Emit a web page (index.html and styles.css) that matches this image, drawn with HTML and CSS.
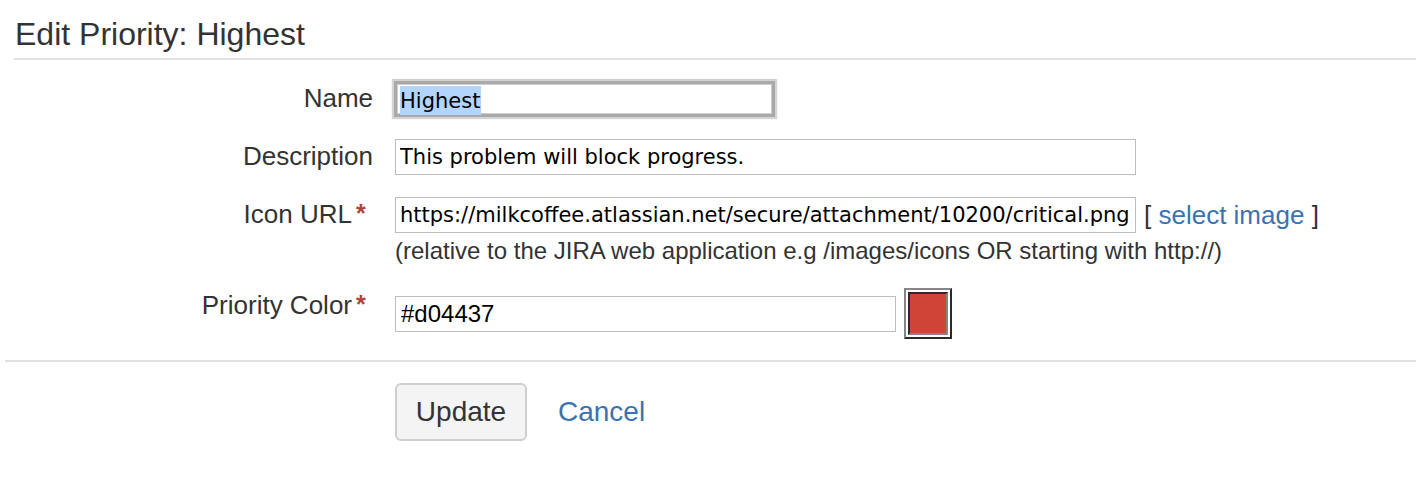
FILE: index.html
```html
<!DOCTYPE html>
<html>
<head>
<meta charset="utf-8">
<link rel="stylesheet" href="styles.css">
<title>Edit Priority</title>
</head>
<body>
<header class="page-head">
  <h2 class="title">Edit Priority: Highest</h2>
</header>
<form class="form">
  <div class="fields">
    <div class="row">
      <label class="label">Name</label>
      <div class="field">
        <div class="input input-focus"><span class="selected">Highest</span></div>
      </div>
    </div>
    <div class="row">
      <label class="label">Description</label>
      <div class="field">
        <input class="input input-wide" type="text" value="This problem will block progress.">
      </div>
    </div>
    <div class="row">
      <label class="label">Icon URL<span class="req">*</span></label>
      <div class="field field-col">
        <div class="inline">
          <input class="input input-wide" type="text" value="https://milkcoffee.atlassian.net/secure/attachment/10200/critical.png">
          <span class="picker">[ <a class="link" href="#">select image</a> ]</span>
        </div>
        <div class="help">(relative to the JIRA web application e.g /images/icons OR starting with http://)</div>
      </div>
    </div>
    <div class="row">
      <label class="label">Priority Color<span class="req">*</span></label>
      <div class="field inline color-field">
        <input class="input input-color" type="text" value="#d04437">
        <span class="swatch"><span class="swatch-fill"></span></span>
      </div>
    </div>
  </div>
  <div class="buttons">
    <button class="button" type="button">Update</button>
    <a class="link cancel" href="#">Cancel</a>
  </div>
</form>
</body>
</html>
```
FILE: styles.css
```css
html, body {
  margin: 0;
  padding: 0;
  background: #fff;
}
body {
  font-family: "Liberation Sans", Arial, sans-serif;
  color: #333;
}
.page-head {
  margin-left: 14px;
  padding: 18px 0 8px 1px;
  border-bottom: 2px solid #e1e1e1;
}
.title {
  margin: 0;
  font-size: 32px;
  line-height: 32px;
  font-weight: normal;
  color: #333;
}
.form {
  margin: 0;
}
.fields {
  display: flex;
  flex-direction: column;
  gap: 22px;
  padding: 21px 0 21px 0;
  margin-left: 5px;
  border-bottom: 2px solid #e1e1e1;
}
.row {
  display: flex;
  align-items: flex-start;
}
.label {
  width: 368px;
  flex: none;
  text-align: right;
  font-size: 26px;
  line-height: 30px;
  padding-top: 2px;
  color: #333;
}
.req {
  display: inline-block;
  width: 21px;
  padding-left: 4px;
  padding-top: 3px;
  box-sizing: border-box;
  text-align: left;
  color: #b0433a;
  font-size: 25px;
  font-weight: bold;
  line-height: 22px;
  vertical-align: top;
}
.field {
  margin-left: 22px;
}
.field-col {
  display: flex;
  flex-direction: column;
}
.inline {
  display: flex;
  align-items: center;
}
.input {
  box-sizing: border-box;
  height: 36px;
  margin: 0;
  border: 1px solid #bdbdbd;
  border-radius: 0;
  padding: 0 4px;
  background: #fff;
  font-family: "DejaVu Sans", sans-serif;
  font-size: 21px;
  color: #000;
  outline: none;
}
.input-focus {
  width: 381px;
  margin-left: -1px;
  border: 3px solid #a9a9a9;
  padding: 2px 0 0 3px;
  box-shadow: 0 0 1px 2px #d4d4d4, inset 0 0 0 1px #cfcfcf;
  display: flex;
  align-items: flex-start;
}
.selected {
  background: #b3d4fc;
  line-height: 28px;
  padding-top: 1px;
  padding-right: 1px;
}
.input-wide {
  width: 741px;
}
.picker {
  margin-left: 8px;
  font-size: 26px;
  line-height: 30px;
  color: #333;
}
.link {
  color: #3b73af;
  text-decoration: none;
}
.help {
  margin-top: 3px;
  font-size: 24px;
  line-height: 30px;
  color: #333;
}
.color-field {
  height: 51px;
}
.input-color {
  width: 501px;
  font-family: "Liberation Sans", Arial, sans-serif;
  font-size: 24px;
  padding-left: 5px;
}
.swatch {
  box-sizing: border-box;
  margin-left: 8px;
  width: 48px;
  height: 51px;
  border: 2px solid;
  border-color: #858585 #2a2a2a #2a2a2a #858585;
  padding: 2px;
  background: #fff;
  display: flex;
}
.swatch-fill {
  flex: 1;
  border: 2px solid;
  border-color: #2a2a2a #858585 #858585 #2a2a2a;
  background: #d04437;
}
.buttons {
  display: flex;
  align-items: center;
  padding: 21px 0 0 395px;
}
.button {
  box-sizing: border-box;
  width: 132px;
  height: 58px;
  border: 2px solid #cfcfcf;
  border-radius: 6px;
  background: #f4f4f4;
  font-family: "Liberation Sans", Arial, sans-serif;
  font-size: 28px;
  color: #333;
  padding: 0;
}
.cancel {
  margin-left: 31px;
  font-size: 28px;
}
```
